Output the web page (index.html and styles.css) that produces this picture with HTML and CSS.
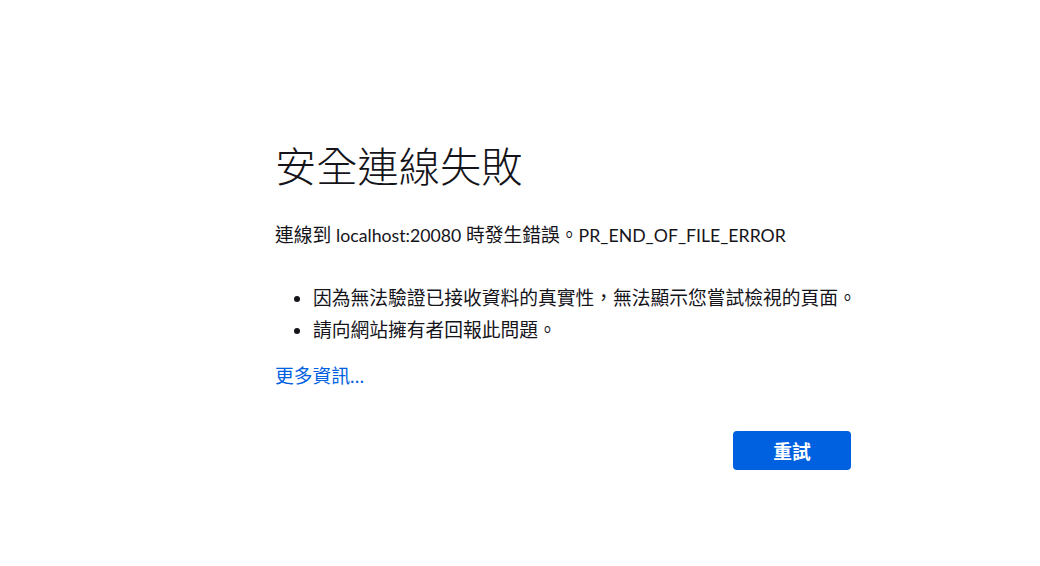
FILE: index.html
```html
<!DOCTYPE html>
<html lang="zh-TW">
<head>
<meta charset="utf-8">
<title>安全連線失敗</title>
<link rel="stylesheet" href="styles.css">
</head>
<body>
<main class="page">
  <div class="container">
    <h1 class="title">安全連線失敗</h1>
    <p class="short-desc">連線到 <span class="latin">localhost:20080</span> 時發生錯誤。<span class="latin">PR_END_OF_FILE_ERROR</span></p>
    <ul class="desc-list">
      <li>因為無法驗證已接收資料的真實性，無法顯示您嘗試檢視的頁面。</li>
      <li>請向網站擁有者回報此問題。</li>
    </ul>
    <a class="learn-more" href="#">更多資訊…</a>
    <div class="button-row">
      <button class="primary" type="button">重試</button>
    </div>
  </div>
</main>
</body>
</html>
```

FILE: styles.css
```css
html, body {
  margin: 0;
  padding: 0;
  background: #ffffff;
}

body {
  color: #15141a;
  font-family: "Lato", "Noto Sans CJK TC", sans-serif;
  font-size: 18.75px;
}

.page {
  padding: 139px 0 0 275px;
}

.container {
  width: 576px;
  display: flex;
  flex-direction: column;
}

.title {
  margin: 0;
  font-family: "Noto Sans CJK TC", serif;
  font-weight: 300;
  font-size: 41.25px;
  line-height: 50px;
  letter-spacing: 0;
}

.short-desc {
  margin: 32px 0 0;
  height: 28px;
  line-height: 28px;
  white-space: nowrap;
}

.latin {
  font-size: 17.7px;
  line-height: 1;
}

.desc-list {
  margin: 33px 0 0;
  padding: 0 0 0 38px;
}

.desc-list li {
  line-height: 32px;
  white-space: nowrap;
}

.learn-more {
  margin-top: 16px;
  line-height: 28px;
  color: #0061e0;
  text-decoration: none;
  align-self: flex-start;
}

.button-row {
  margin-top: 41px;
  display: flex;
  justify-content: flex-end;
}

.primary {
  width: 118px;
  height: 39px;
  border: none;
  border-radius: 4px;
  background: #0061e0;
  color: #ffffff;
  font-family: "Lato", "Noto Sans CJK TC", sans-serif;
  font-size: 18.75px;
  font-weight: 700;
  cursor: pointer;
}
```
